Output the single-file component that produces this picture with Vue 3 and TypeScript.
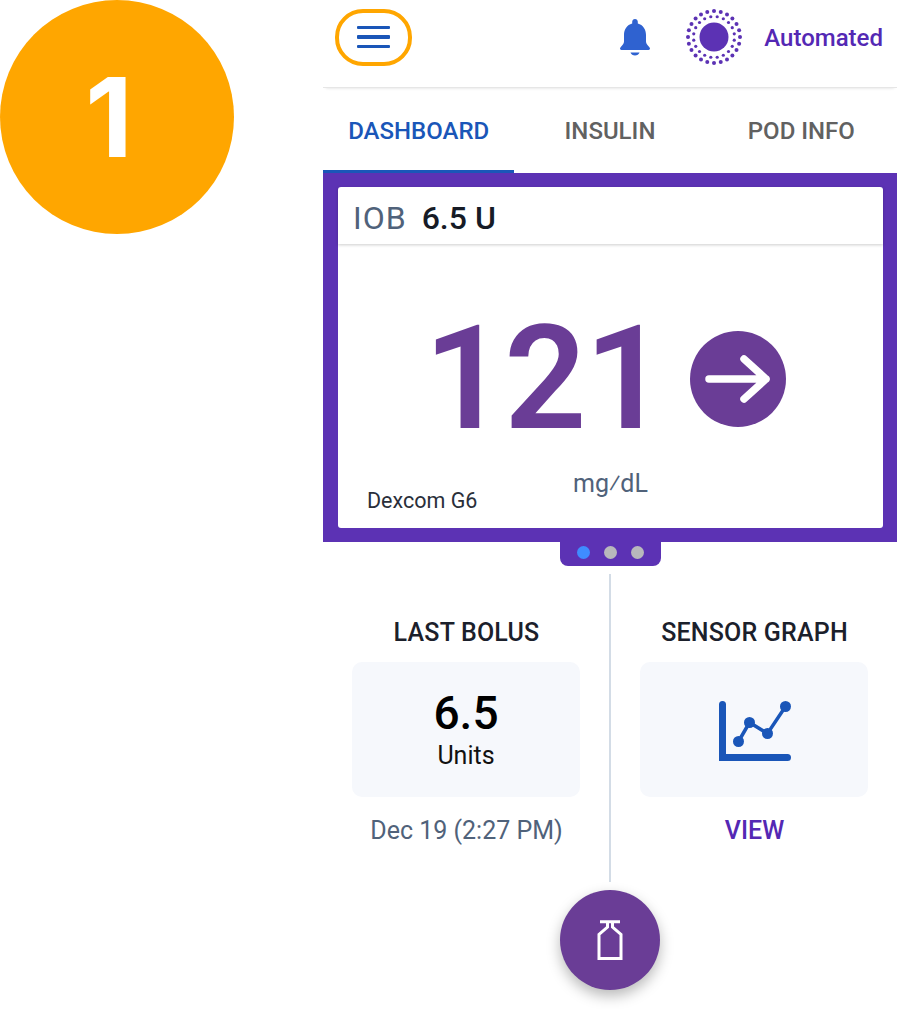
<script setup lang="ts">
const tabs = ['DASHBOARD', 'INSULIN', 'POD INFO'];

function ring(count: number, radius: number, offset = 0) {
  return Array.from({ length: count }, (_, i) => {
    const a = ((i + offset) / count) * Math.PI * 2;
    return { x: 28 + radius * Math.cos(a), y: 28 + radius * Math.sin(a) };
  });
}

const outerDots = ring(24, 26);
const innerDots = ring(20, 20.5, 0.5);
</script>

<template>
  <div class="page">
    <div class="step-col">
      <div class="step">1</div>
    </div>
    <main class="phone">
      <header class="topbar">
        <div class="menu-ring">
          <span></span>
          <span></span>
          <span></span>
        </div>
        <svg class="bell" width="30" height="37" viewBox="0 0 30 37">
          <path
            d="M15 0c1.600 0 2.800 1.200 2.800 2.800v1.800C23 6 26 10.500 26 16v6.500c0 2 1.500 3.500 3 5.200.6.700 1 1.300 1 1.900 0 .8-.6 1.400-1.400 1.400H1.400C.6 31 0 30.400 0 29.600c0-.6.400-1.200 1-1.900 1.500-1.700 3-3.200 3-5.200V16c0-5.500 3-10 8.200-11.400V2.800C12.200 1.200 13.400 0 15 0z"
            fill="#2f62d0"
          />
          <path d="M10.500 33.500h9c-.6 1.800-2.400 3-4.500 3s-3.900-1.200-4.500-3z" fill="#2f62d0" />
        </svg>
        <svg class="status-icon" width="56" height="56" viewBox="0 0 56 56">
          <circle cx="28" cy="28" r="14.500" fill="#5c32b4" />
          <circle v-for="(d, i) in outerDots" :key="'o' + i" :cx="d.x" :cy="d.y" r="2" fill="#5c32b4" />
          <circle v-for="(d, i) in innerDots" :key="'i' + i" :cx="d.x" :cy="d.y" r="1.600" fill="#5c32b4" />
        </svg>
        <span class="mode">Automated</span>
      </header>

      <nav class="tabs">
        <div v-for="(tab, i) in tabs" :key="tab" class="tab" :class="{ active: i === 0 }">{{ tab }}</div>
      </nav>

      <section class="hero">
        <div class="card">
          <div class="iob">
            <span class="iob-label">IOB</span>
            <span class="iob-value">6.5 U</span>
          </div>
          <div class="reading">
            <span class="glucose">121</span>
            <svg class="trend" width="96" height="96" viewBox="0 0 96 96">
              <circle cx="48" cy="48" r="48" fill="#6a3d96" />
              <path
                d="M19 48h57M54 28l22 20-22 20"
                fill="none"
                stroke="#fff"
                stroke-width="7.500"
                stroke-linecap="round"
                stroke-linejoin="round"
              />
            </svg>
          </div>
          <div class="card-foot">
            <span class="sensor">Dexcom G6</span>
            <span class="unit">mg⁄dL</span>
          </div>
        </div>
      </section>
      <div class="pager">
        <i class="on"></i>
        <i></i>
        <i></i>
      </div>

      <section class="summary">
        <div class="col">
          <h3>LAST BOLUS</h3>
          <div class="box">
            <strong>6.5</strong>
            <span>Units</span>
          </div>
          <p class="date">Dec 19 (2:27 PM)</p>
        </div>
        <div class="divider"></div>
        <div class="col">
          <h3>SENSOR GRAPH</h3>
          <div class="box">
            <svg class="graph" width="73" height="60" viewBox="0 0 73 60">
              <path d="M3.500 3.500v53h65" fill="none" stroke="#1a56b8" stroke-width="7" stroke-linecap="round" />
              <path d="M0 53h7v7H0z" fill="#1a56b8" />
              <path d="M19.500 40.500l11-19 18 11 18-27" fill="none" stroke="#1a56b8" stroke-width="3.500" />
              <circle cx="19.500" cy="40.500" r="5.500" fill="#1a56b8" />
              <circle cx="30.500" cy="21.500" r="5.500" fill="#1a56b8" />
              <circle cx="48.500" cy="32.500" r="5.500" fill="#1a56b8" />
              <circle cx="66.500" cy="5.500" r="5.500" fill="#1a56b8" />
            </svg>
          </div>
          <p class="view">VIEW</p>
        </div>
      </section>

      <div class="fab">
        <svg width="26" height="40" viewBox="0 0 26 40">
          <path
            d="M3 1.700h20M10.500 2v5L2 14.500v24h22v-24L15.500 7V2"
            fill="none"
            stroke="#fff"
            stroke-width="3"
          />
        </svg>
      </div>
    </main>
  </div>
</template>

<style>
html,
body {
  margin: 0;
  background: #fff;
}
</style>

<style scoped>
.page {
  display: flex;
  width: 900px;
  height: 1009px;
  overflow: hidden;
  font-family: Roboto, "Liberation Sans", sans-serif;
  background: #fff;
}

.step-col {
  width: 323px;
  flex: none;
}

.step {
  display: flex;
  align-items: center;
  justify-content: center;
  width: 234px;
  height: 234px;
  box-sizing: border-box;
  padding-right: 16px;
  border-radius: 50%;
  background: #ffa600;
  color: #fff;
  font-family: Inter, Roboto, sans-serif;
  font-size: 110px;
  font-weight: 700;
}

.phone {
  display: flex;
  flex-direction: column;
  width: 574px;
  flex: none;
}

.topbar {
  display: flex;
  align-items: center;
  height: 88px;
  flex: none;
  padding: 0 14px 13px 12px;
  box-sizing: border-box;
  border-bottom: 1px solid #e6e6e6;
  box-shadow: 0 3px 3px -3px rgba(0, 0, 0, 0.15);
}

.menu-ring {
  display: flex;
  flex-direction: column;
  justify-content: center;
  align-items: center;
  gap: 6px;
  width: 77px;
  height: 57px;
  box-sizing: border-box;
  border: 4px solid #ffa600;
  border-radius: 28px;
}

.menu-ring span {
  width: 33px;
  height: 3.500px;
  border-radius: 1px;
  background: #1a56b8;
}

.bell {
  margin-left: auto;
}

.status-icon {
  margin-left: 36px;
}

.mode {
  margin-left: 22px;
  margin-top: 2px;
  color: #5428b4;
  font-size: 24px;
  font-weight: 500;
}

.tabs {
  display: flex;
  height: 85px;
  flex: none;
}

.tab {
  flex: 1;
  display: flex;
  align-items: center;
  justify-content: center;
  box-sizing: border-box;
  color: #616161;
  font-size: 24px;
  font-weight: 500;
}

.tab.active {
  color: #1a56b8;
  border-bottom: 4px solid #1a56b8;
  padding-top: 3px;
  margin-bottom: -1px;
}

.hero {
  flex: none;
  height: 369px;
  box-sizing: border-box;
  padding: 14px 14px 14px 15px;
  background: #5c32b4;
}

.card {
  display: flex;
  flex-direction: column;
  height: 341px;
  border-radius: 3px;
  background: #fff;
}

.iob {
  display: flex;
  align-items: center;
  gap: 15px;
  height: 57px;
  flex: none;
  box-sizing: border-box;
  padding: 4px 0 0 15px;
  box-shadow: 0 1px 3px rgba(0, 0, 0, 0.2);
}

.iob-label {
  color: #50627a;
  font-size: 32px;
  letter-spacing: 1px;
}

.iob-value {
  color: #161b26;
  font-size: 32px;
  font-weight: 500;
}

.reading {
  display: flex;
  align-items: center;
  justify-content: center;
  height: 225px;
  flex: none;
  box-sizing: border-box;
  padding: 45px 11px 0 0;
  gap: 25px;
}

.glucose {
  color: #6a3d96;
  font-size: 144px;
  font-weight: 600;
  letter-spacing: -2px;
  line-height: 1;
}

.trend {
  flex: none;
}

.card-foot {
  display: flex;
  align-items: flex-end;
  flex: 1;
  padding: 0 0 15px 29px;
}

.sensor {
  width: 206px;
  color: #2a2f3a;
  font-size: 21.500px;
}

.unit {
  color: #50627a;
  font-size: 25px;
  margin-bottom: 15px;
}

.pager {
  display: flex;
  align-items: center;
  justify-content: center;
  gap: 14px;
  width: 101px;
  height: 24px;
  flex: none;
  box-sizing: border-box;
  padding-bottom: 4px;
  margin-left: 237px;
  border-radius: 0 0 8px 8px;
  background: #5c32b4;
}

.pager i {
  width: 13px;
  height: 13px;
  border-radius: 50%;
  background: #b8b8bc;
}

.pager i.on {
  background: #3f8cff;
}

.summary {
  display: flex;
  height: 308px;
  flex: none;
  margin-top: 8px;
}

.col {
  display: flex;
  flex-direction: column;
  align-items: center;
  flex: 1;
}

.divider {
  width: 2px;
  flex: none;
  background: #d3dce6;
}

.col h3 {
  margin: 44px 0 0;
  height: 44px;
  padding-left: 1px;
  color: #1b202b;
  font-size: 25px;
  font-weight: 500;
  letter-spacing: 0.200px;
}

.box {
  display: flex;
  flex-direction: column;
  align-items: center;
  justify-content: center;
  width: 228px;
  height: 135px;
  border-radius: 10px;
  background: #f6f8fc;
}

.box strong {
  color: #000;
  font-size: 46px;
  font-weight: 500;
  line-height: 50px;
}

.box span {
  margin-top: 2px;
  color: #111;
  font-size: 25px;
  line-height: 32px;
}

.graph {
  margin: 2px 0 0 2px;
}

.date {
  margin: 19px 0 0;
  padding-left: 1px;
  color: #50627a;
  font-size: 25px;
}

.view {
  margin: 19px 0 0;
  padding-left: 1px;
  color: #5428b4;
  font-size: 25px;
  font-weight: 500;
}

.fab {
  display: flex;
  align-items: center;
  justify-content: center;
  width: 100px;
  height: 100px;
  flex: none;
  margin: 8px 0 0 237px;
  border-radius: 50%;
  background: #6a3d96;
  box-shadow: 0 6px 14px rgba(0, 0, 0, 0.28);
}
</style>
